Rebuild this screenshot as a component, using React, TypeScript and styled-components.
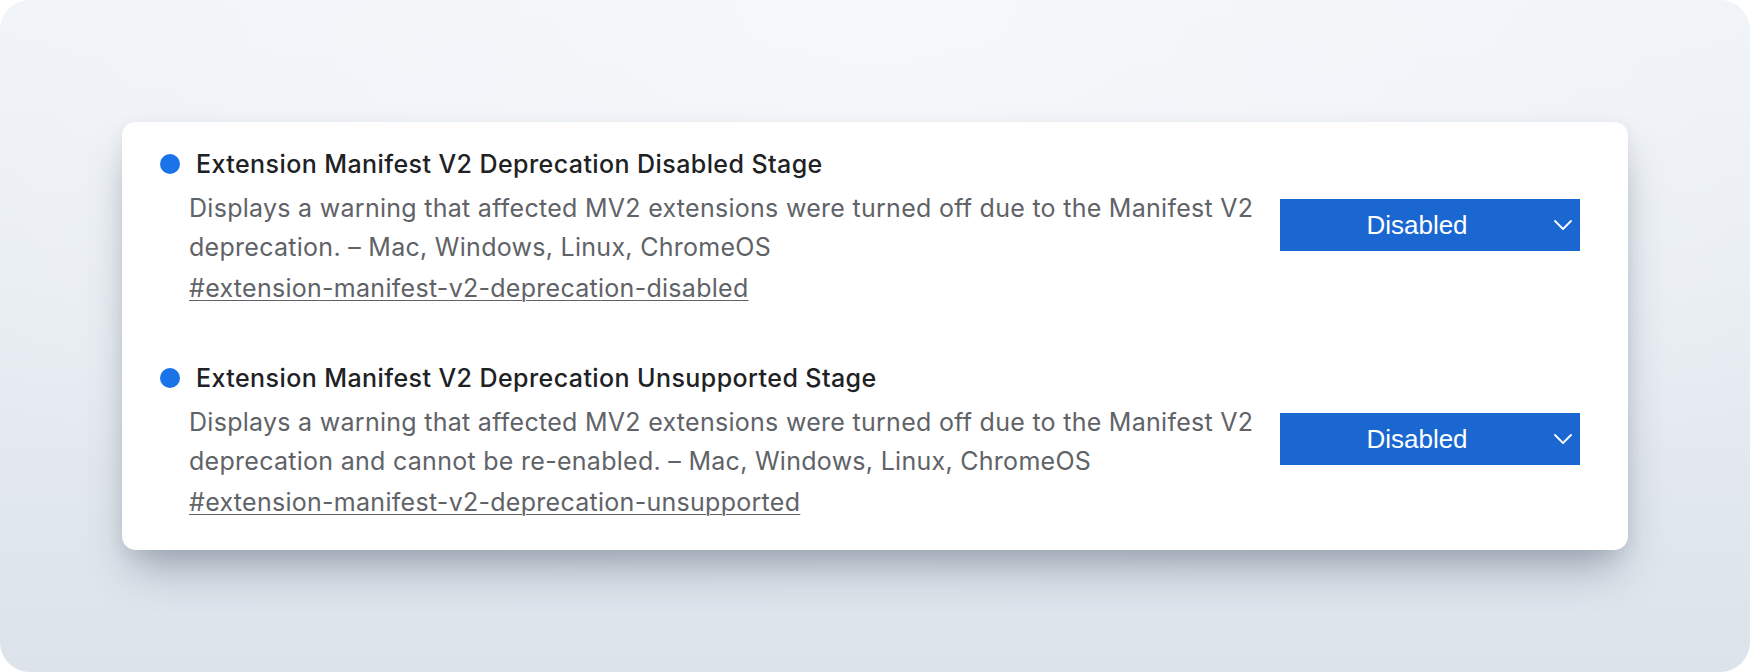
import styled, { createGlobalStyle } from "styled-components";

const GlobalStyle = createGlobalStyle`
  html, body {
    margin: 0;
    padding: 0;
    background: #ffffff;
  }
  body {
    font-family: Inter, "Noto Sans", sans-serif;
    -webkit-font-smoothing: antialiased;
  }
`;

type Flag = {
    id: string
    name: string
    description: string
    platforms: string
    value: string
};

const flags: Flag[] = [
    {
        id: "extension-manifest-v2-deprecation-disabled",
        name: "Extension Manifest V2 Deprecation Disabled Stage",
        description:
            "Displays a warning that affected MV2 extensions were turned off due to the Manifest V2 deprecation.",
        platforms: "Mac, Windows, Linux, ChromeOS",
        value: "Disabled",
    },
    {
        id: "extension-manifest-v2-deprecation-unsupported",
        name: "Extension Manifest V2 Deprecation Unsupported Stage",
        description:
            "Displays a warning that affected MV2 extensions were turned off due to the Manifest V2 deprecation and cannot be re-enabled.",
        platforms: "Mac, Windows, Linux, ChromeOS",
        value: "Disabled",
    },
];

const Chevron = () => (
    <svg width="18" height="10" viewBox="0 0 18 10" fill="none">
        <path d="M1 1l8 8 8-8" stroke="#ffffff" strokeWidth="1.8" strokeLinecap="round" strokeLinejoin="round" />
    </svg>
);

const App = (): JSX.Element => {
    return (
        <>
            <GlobalStyle />
            <Frame>
                <Card>
                    {flags.map((flag) => (
                        <Experiment key={flag.id}>
                            <Title>
                                <Dot />
                                {flag.name}
                            </Title>
                            <Body>
                                <TextColumn>
                                    <Description>
                                        {flag.description} – {flag.platforms}
                                    </Description>
                                    <Permalink href={"#" + flag.id}>#{flag.id}</Permalink>
                                </TextColumn>
                                <SelectBox>
                                    <SelectLabel>{flag.value}</SelectLabel>
                                    <Chevron />
                                </SelectBox>
                            </Body>
                        </Experiment>
                    ))}
                </Card>
            </Frame>
        </>
    );
};

export default App;

const Frame = styled.div`
  width: 1750px;
  height: 672px;
  box-sizing: border-box;
  padding: 122px;
  border-radius: 30px;
  overflow: hidden;
  background:
    radial-gradient(ellipse 70% 90% at 50% 0%, #f6f8fb 0%, rgba(246, 248, 251, 0) 100%),
    linear-gradient(180deg, #eef2f6 0%, #e6ebf1 55%, #dce3eb 100%);
`;

const Card = styled.div`
  height: 100%;
  box-sizing: border-box;
  background: #ffffff;
  border-radius: 14px;
  padding: 26px 48px 0 67px;
  display: flex;
  flex-direction: column;
  gap: 54px;
  box-shadow:
    0 26px 44px -10px rgba(60, 72, 92, 0.42),
    0 6px 16px rgba(60, 72, 92, 0.08);
`;

const Experiment = styled.section`
  display: flex;
  flex-direction: column;
`;

const Title = styled.h3`
  margin: 0 0 0 -29px;
  display: flex;
  align-items: center;
  gap: 16px;
  font-size: 25px;
  letter-spacing: 0.42px;
  line-height: 32px;
  font-weight: 500;
  color: #202124;
`;

const Dot = styled.span`
  width: 20px;
  height: 20px;
  border-radius: 50%;
  background: #1a73e8;
  flex-shrink: 0;
`;

const Body = styled.div`
  display: flex;
  align-items: flex-start;
  gap: 12px;
  margin-top: 9px;
`;

const TextColumn = styled.div`
  flex: 1;
  display: flex;
  flex-direction: column;
  font-size: 25px;
  letter-spacing: 0.28px;
  line-height: 39px;
  color: #5f6368;
`;

const Description = styled.p`
  margin: 0;
`;

const Permalink = styled.a`
  margin-top: 2px;
  color: #5f6368;
  text-decoration: underline;
  text-underline-offset: 3px;
  text-decoration-thickness: 1px;
  align-self: flex-start;
`;

const SelectBox = styled.div`
  width: 300px;
  height: 52px;
  margin-top: 10px;
  box-sizing: border-box;
  padding-right: 8px;
  display: flex;
  align-items: center;
  background: #1a67d2;
  color: #ffffff;
  flex-shrink: 0;
  cursor: pointer;
`;

const SelectLabel = styled.span`
  flex: 1;
  text-align: center;
  font-family: "Liberation Sans", Arial, sans-serif;
  font-size: 26px;
`;
